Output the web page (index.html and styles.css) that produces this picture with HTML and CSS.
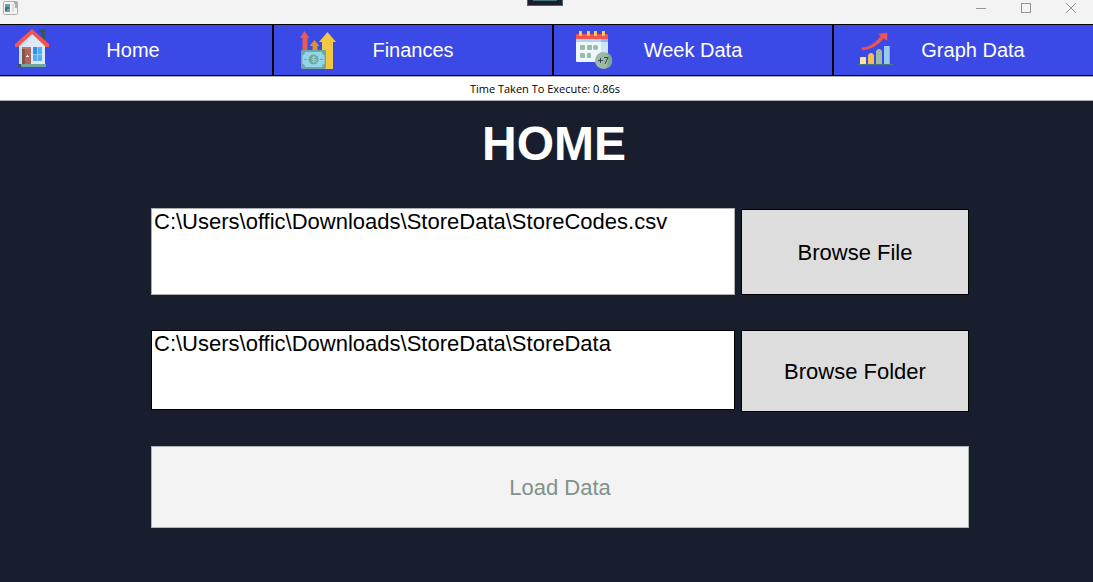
FILE: index.html
```html
<!DOCTYPE html>
<html lang="en">
<head>
<meta charset="utf-8">
<title>Home</title>
<link rel="stylesheet" href="styles.css">
</head>
<body>
<header class="titlebar">
  <svg class="app-icon" viewBox="0 0 16 14" aria-hidden="true">
    <rect x="0.5" y="0.5" width="14" height="13" rx="1" fill="#f3f3f3" stroke="#a9b0ae"/>
    <rect x="2" y="3" width="5" height="8" fill="#6aa397"/>
    <path d="M2 6h4v2h-2v2h-2z" fill="#3f6f8f"/>
    <rect x="9" y="3" width="2" height="8" fill="#dcdcdc"/>
    <path d="M11 1h4v6h-3V3h-1z" fill="#a9b0ae"/>
  </svg>
  <div class="debug-tab"></div>
  <div class="window-controls">
    <button class="window-button" aria-label="Minimize"><svg viewBox="0 0 12 12"><path d="M1 6.5h10"/></svg></button>
    <button class="window-button" aria-label="Maximize"><svg viewBox="0 0 12 12"><rect x="1.5" y="1.5" width="9" height="9"/></svg></button>
    <button class="window-button" aria-label="Close"><svg viewBox="0 0 12 12"><path d="M1 1l10 10M11 1L1 11"/></svg></button>
  </div>
</header>
<div class="nav-frame">
<nav class="nav">
  <button class="nav-button">
    <svg class="nav-icon" viewBox="0 0 44 44" aria-hidden="true">
      <path d="M26 1h7v3h-1v9h-4V4h-2z" fill="#3b5560"/>
      <path d="M6 16L19 4l13 12v20H6z" fill="#dfe7fa"/>
      <path d="M6 17L19 5v4L9 18v18H6z" fill="#b3e5fa"/>
      <path d="M19 1l17 15v3h-3L19 6 5 19H2v-3z" fill="#f3564f"/>
      <rect x="9" y="19" width="9" height="17" fill="#a8685a"/>
      <rect x="9" y="19" width="3" height="17" fill="#8a5048"/>
      <path d="M9 19h9v2H9z" fill="#b97a63"/>
      <path d="M14 27h1v1h1v1h-3v-1h1z" fill="#f4e6dc"/>
      <rect x="20" y="19" width="9" height="14" fill="#55aef5"/>
      <path d="M20 19h4v7h-4z" fill="#2f93ea"/>
      <path d="M24.500 19v14M20 26.500h9" stroke="#8cd0fb"/>
      <rect x="5" y="36" width="28" height="3" fill="#6fa79b"/>
      <rect x="5" y="36" width="3" height="3" fill="#3b5560"/>
    </svg>
    <span class="nav-label">Home</span>
  </button>
  <button class="nav-button">
    <svg class="nav-icon" viewBox="0 0 44 44" aria-hidden="true">
      <path d="M11.500 3l5 7h-2v13h-5V10h-2.500z" fill="#e65a57"/>
      <path d="M21.500 12l5 6h-2v5h-5v-5h-3z" fill="#d9932f"/>
      <path d="M34.500 4l8.500 10h-3v27H29V14h-3z" fill="#f2c744"/>
      <rect x="8" y="22" width="25" height="19" rx="1" fill="#6fa79b"/>
      <path d="M12 24h17q0 3 2.500 3v9q-2.500 0-2.500 3H12q0-3-2.500-3v-9q2.500 0 2.500-3z" fill="#93d6ec"/>
      <circle cx="20.500" cy="31.500" r="5" fill="#6fa79b"/>
      <path d="M11 31.500h3M27 31.500h3" stroke="#6fa79b"/>
      <path d="M22.500 29.500q-3.500-1-3.500.8t3 1.400-.2 2.500q-1.500 0-2.500-.7M20.700 28v7" fill="none" stroke="#93d6ec"/>
    </svg>
    <span class="nav-label">Finances</span>
  </button>
  <button class="nav-button">
    <svg class="nav-icon" viewBox="0 0 44 44" aria-hidden="true">
      <rect x="3" y="9" width="32" height="25" rx="1" fill="#eef6ff"/>
      <path d="M28 14h7v14h-7z" fill="#cfe5fb"/>
      <path d="M3 7q0-1 1-1h30q1 0 1 1v4H3z" fill="#f0554f"/>
      <path d="M3 11h32v3H3z" fill="#a8d8f8"/>
      <path d="M28 11h7v3h-7z" fill="#7fbff0"/>
      <path d="M7.500 3v5M15.500 3v5M22.500 3v5M30.500 3v5" stroke="#f3bd4c" stroke-width="3"/>
      <path d="M7 3v4M15 3v4M22 3v4M30 3v4" stroke="#ffe09a"/>
      <g fill="#9dbaa2"><rect x="7" y="17" width="5" height="5" rx="1"/><rect x="14" y="17" width="5" height="5" rx="1"/><rect x="20" y="17" width="5" height="5" rx="2"/><rect x="7" y="25" width="5" height="5" rx="1"/><rect x="14" y="25" width="4" height="5" rx="1"/></g>
      <circle cx="30.500" cy="32.500" r="8.500" fill="#9dbaa2"/>
      <path d="M34 24.700a8.500 8.500 0 0 1-1 16q4-8 1-16z" fill="#7fa795"/>
      <path d="M25 32.500h5M27.500 30v5M31 29.500h4l-3 6.500" fill="none" stroke="#2f4a55"/>
    </svg>
    <span class="nav-label">Week Data</span>
  </button>
  <button class="nav-button">
    <svg class="nav-icon" viewBox="0 0 44 44" aria-hidden="true">
      <path d="M7 36v-6q0-1 1-1h5v7z" fill="#fbe3a4"/>
      <path d="M15 36V27l2-2h2l2 2v9z" fill="#f3bd56"/>
      <path d="M23 36V23l2-2h2l2 2v13z" fill="#9dbaa2"/>
      <rect x="31" y="18" width="6" height="18" fill="#98cbf2"/>
      <path d="M36 18h1v18h-1z" fill="#6faee8"/>
      <path d="M4 36.500h36" stroke="#4d7684"/>
      <path d="M9 20q11-1 19-12l-2-1V6l8-1v7h-1l-2-2Q22 21 9 22z" fill="#f0554f" stroke="#f0554f" stroke-width="0.500"/>
    </svg>
    <span class="nav-label">Graph Data</span>
  </button>
</nav>
</div>
<div class="status" role="status">Time Taken To Execute: 0.86s</div>
<main class="content">
  <h1 class="heading">HOME</h1>
  <form class="form">
    <div class="row">
      <textarea class="path path-file" aria-label="Store codes file" spellcheck="false">C:\Users\offic\Downloads\StoreData\StoreCodes.csv</textarea>
      <button class="action browse-file" type="button">Browse File</button>
    </div>
    <div class="row">
      <textarea class="path path-folder" aria-label="Store data folder" spellcheck="false">C:\Users\offic\Downloads\StoreData\StoreData</textarea>
      <button class="action browse-folder" type="button">Browse Folder</button>
    </div>
    <button class="action load" type="button" disabled>Load Data</button>
  </form>
</main>
</body>
</html>
```
FILE: styles.css
```css
* { box-sizing: border-box; }

body {
  margin: 0;
  min-height: 100vh;
  background: #181e2d;
  font-family: "Liberation Sans", Arial, sans-serif;
}

button { font-family: inherit; margin: 0; padding: 0; }

.titlebar {
  position: relative;
  display: flex;
  justify-content: space-between;
  height: 24px;
  background: #f3f3f3;
}

.app-icon { width: 16px; height: 14px; margin: 1px 0 0 3px; }

.debug-tab {
  position: absolute;
  top: 0;
  left: calc(50% - 20px);
  width: 36px;
  height: 6px;
  background: #1c1f2b;
  border: 1px solid #44697c;
  border-top: 0;
}

.debug-tab::before {
  content: "";
  display: block;
  height: 1px;
  margin: 0 5px;
  background: #44757c;
}

.window-controls { display: flex; }

.window-button {
  width: 45px;
  height: 16px;
  border: 0;
  background: none;
  line-height: 0;
}

.window-button svg {
  width: 12px;
  height: 12px;
  fill: none;
  stroke: #8f9791;
}

.nav-frame { overflow: hidden; }

/* The tab strip runs past both window edges. */
.nav {
  display: grid;
  grid-template-columns: repeat(4, 1fr);
  margin: 0 -20px 0 -7px;
}

.nav-button {
  display: grid;
  grid-template-columns: 82px 1fr 82px;
  align-items: center;
  height: 52px;
  border: 1px solid #000;
  background: #3b49e6;
  color: #fff;
  font-size: 20px;
}

.nav-icon { width: 44px; height: 44px; justify-self: center; }

.status {
  height: 25px;
  padding-right: 3px;
  border: 1px solid #abadb3;
  border-width: 1px 0;
  background: #fff;
  color: #000;
  font-family: "Open Sans", "Noto Sans", sans-serif;
  font-size: 11px;
  line-height: 24px;
  text-align: center;
}

.content { padding: 15px 124px 54px 151px; }

.heading {
  margin: 0;
  padding-right: 12px;
  color: #fff;
  font-size: 48px;
  line-height: 56px;
  text-align: center;
}

.form { display: flex; flex-direction: column; margin-top: 36px; }

.row { display: flex; gap: 6px; margin-bottom: 34px; }
.row:first-child { margin-bottom: 35px; }

.path {
  flex: 1;
  min-width: 0;
  margin: 0;
  padding: 0 2px;
  border: 1px solid #000;
  border-radius: 0;
  background: #fff;
  color: #000;
  font: 22px/25px "Liberation Sans", Arial, sans-serif;
  resize: none;
}

.path-file { height: 87px; border-color: #abadb3; }
.path-folder { height: 80px; }

.action {
  width: 228px;
  padding-top: 2px;
  border: 1px solid #000;
  background: #ddd;
  color: #000;
  font-size: 22px;
}

.browse-file { height: 86px; align-self: flex-end; }
.browse-folder { height: 82px; }

.load {
  width: 100%;
  height: 82px;
  border-color: #adb2b5;
  background: #f3f3f3;
  color: #80938a;
}
```
